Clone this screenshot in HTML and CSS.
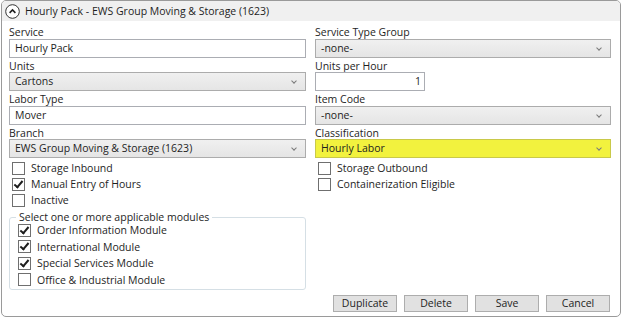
FILE: index.html
```html
<!doctype html>
<html lang="en">
<head>
	<meta charset="UTF-8">
	<title>Hourly Pack</title>
	<link rel="stylesheet" href="styles.css">
</head>
<body>
<div class="panel">
	<div class="head">
		<svg class="toggle" width="15" height="15" viewBox="0 0 15 15">
			<circle cx="7.5" cy="7.5" r="6.8" fill="#fff" stroke="#333" stroke-width="1"/>
			<path d="M4.6 8.9 L7.5 6 L10.4 8.9" fill="none" stroke="#222" stroke-width="1.6"/>
		</svg>
		<span class="title">Hourly Pack - EWS Group Moving &amp; Storage (1623)</span>
	</div>
	<div class="body">
		<div class="cols">
			<div class="col">
				<div class="field">
					<div class="label">Service</div>
					<div class="input">Hourly Pack</div>
				</div>
				<div class="field">
					<div class="label">Units</div>
					<div class="select">Cartons<span class="arrow"></span></div>
				</div>
				<div class="field">
					<div class="label">Labor Type</div>
					<div class="input">Mover</div>
				</div>
				<div class="field">
					<div class="label">Branch</div>
					<div class="select">EWS Group Moving &amp; Storage (1623)<span class="arrow"></span></div>
				</div>
				<div class="checks">
					<div class="check"><span class="box"></span>Storage Inbound</div>
					<div class="check"><span class="box on"></span>Manual Entry of Hours</div>
					<div class="check"><span class="box"></span>Inactive</div>
				</div>
				<div class="group">
					<div class="legend">Select one or more applicable modules</div>
					<div class="check"><span class="box on"></span>Order Information Module</div>
					<div class="check"><span class="box on"></span>International Module</div>
					<div class="check"><span class="box on"></span>Special Services Module</div>
					<div class="check"><span class="box"></span>Office &amp; Industrial Module</div>
				</div>
			</div>
			<div class="col">
				<div class="field">
					<div class="label">Service Type Group</div>
					<div class="select">-none-<span class="arrow"></span></div>
				</div>
				<div class="field">
					<div class="label">Units per Hour</div>
					<div class="input num">1</div>
				</div>
				<div class="field">
					<div class="label">Item Code</div>
					<div class="select">-none-<span class="arrow"></span></div>
				</div>
				<div class="field">
					<div class="label">Classification</div>
					<div class="select hi">Hourly Labor<span class="arrow"></span></div>
				</div>
				<div class="checks">
					<div class="check"><span class="box"></span>Storage Outbound</div>
					<div class="check"><span class="box"></span>Containerization Eligible</div>
				</div>
			</div>
		</div>
		<div class="buttons">
			<div class="btn">Duplicate</div>
			<div class="btn">Delete</div>
			<div class="btn">Save</div>
			<div class="btn">Cancel</div>
		</div>
	</div>
</div>
</body>
</html>
```
FILE: styles.css
```css
body
{
	margin: 0;
	background-color: #ffffff;
	font-family: "Open Sans", "Noto Sans", sans-serif;
	font-size: 10.5px;
	color: #1e1e1e;
}

.panel
{
	width: 618px;
	height: 315px;
	margin-left: 1px;
	border: 1px solid #9a9a9a;
	border-radius: 5px;
	overflow: hidden;
	display: flex;
	flex-direction: column;
}

.head
{
	height: 20px;
	flex: none;
	background-color: #f0f0f0;
	display: flex;
	align-items: center;
	padding-left: 3px;
	gap: 5px;
}

.toggle
{
	display: block;
}

.body
{
	flex: 1;
	padding: 5px 10px 0 7px;
	display: flex;
	flex-direction: column;
}

.cols
{
	display: grid;
	grid-template-columns: 297px 296px;
	column-gap: 9px;
}

.field
{
	margin-bottom: 2px;
}

.label
{
	height: 12.5px;
	line-height: 12.5px;
}

.input, .select
{
	height: 17px;
	line-height: 17px;
	border: 1px solid #abadb3;
	background-color: #ffffff;
	padding-left: 5px;
	position: relative;
}

.input.num
{
	width: 100px;
	text-align: right;
	padding-right: 3px;
}

.select
{
	border-color: #acacac;
	background: linear-gradient(#f0f0f0, #e5e5e5);
}

.select.hi
{
	background: #f2f23e;
	border-color: #c9c94a;
}

.arrow
{
	position: absolute;
	right: 9px;
	top: 6px;
	width: 3px;
	height: 3px;
	border-right: 1px solid #7a7a7a;
	border-bottom: 1px solid #7a7a7a;
	transform: rotate(45deg);
}

.check
{
	height: 16px;
	display: flex;
	align-items: center;
	padding-left: 3px;
}

.box
{
	width: 11px;
	height: 11px;
	border: 1px solid #6f6f6f;
	background-color: #ffffff;
	margin-right: 6px;
	position: relative;
}

.box.on::after
{
	content: "";
	position: absolute;
	left: 3px;
	top: 0px;
	width: 3px;
	height: 7px;
	border-right: 2px solid #1e1e1e;
	border-bottom: 2px solid #1e1e1e;
	transform: rotate(40deg);
}

.group
{
	margin-top: 9px;
	border: 1px solid #d5dfe5;
	border-radius: 3px;
	padding: 4px 0 1px 5px;
	position: relative;
}

.legend
{
	position: absolute;
	top: -8px;
	left: 6px;
	padding: 0 3px 0 3px;
	background-color: #ffffff;
	line-height: 14px;
}

.group .check
{
	height: 16.5px;
}

.buttons
{
	margin-top: auto;
	margin-bottom: 4px;
	display: flex;
	justify-content: flex-end;
	gap: 7px;
}

.btn
{
	width: 62px;
	height: 15px;
	line-height: 15px;
	text-align: center;
	background-color: #e1e1e1;
	border: 1px solid #adadad;
}
```
